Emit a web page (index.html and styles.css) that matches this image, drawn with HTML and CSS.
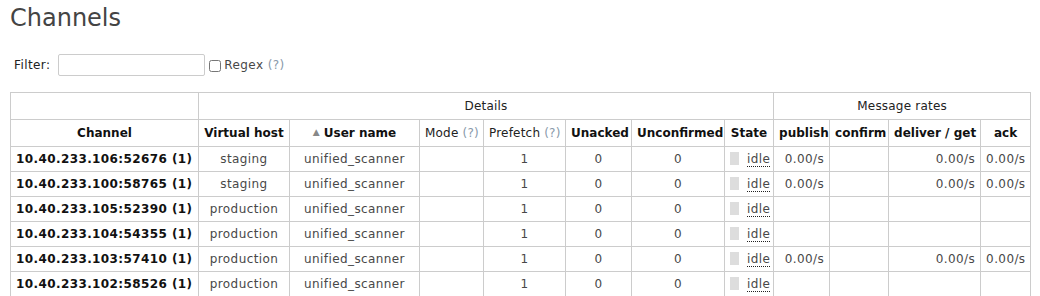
FILE: index.html
```html
<!DOCTYPE html>
<html lang="en">
  <head>
    <meta charset="UTF-8" />
    <title>Channels</title>
    <link rel="stylesheet" href="styles.css">
  </head>
  <body>
    <h1>Channels</h1>

    <div class="filter">
      <label for="filter">Filter:</label>
      <input type="text" id="filter" class="filter-input" />
      <input type="checkbox" id="regex" class="regex-box" />
      <label for="regex" class="regex">Regex <span class="help">(?)</span></label>
    </div>

    <table class="list">
      <colgroup>
        <col style="width: 188px" />
        <col style="width: 91px" />
        <col style="width: 130px" />
        <col style="width: 64px" />
        <col style="width: 82px" />
        <col style="width: 66px" />
        <col style="width: 93px" />
        <col style="width: 49px" />
        <col style="width: 56px" />
        <col style="width: 59px" />
        <col style="width: 92px" />
        <col style="width: 50px" />
      </colgroup>
      <thead>
        <tr class="group">
          <th></th>
          <th colspan="7">Details</th>
          <th colspan="4">Message rates</th>
        </tr>
        <tr>
          <th>Channel</th>
          <th>Virtual host</th>
          <th><span class="arrow">&#9650;</span> User name</th>
          <th class="plain">Mode <span class="help">(?)</span></th>
          <th class="plain">Prefetch <span class="help">(?)</span></th>
          <th>Unacked</th>
          <th>Unconfirmed</th>
          <th>State</th>
          <th>publish</th>
          <th>confirm</th>
          <th>deliver / get</th>
          <th>ack</th>
        </tr>
      </thead>
      <tbody>
        <tr>
          <td class="name">10.40.233.106:52676 (1)</td>
          <td class="c">staging</td>
          <td class="c">unified_scanner</td>
          <td></td>
          <td class="c">1</td>
          <td class="c">0</td>
          <td class="c">0</td>
          <td><span class="state"></span><abbr>idle</abbr></td>
          <td class="r">0.00/s</td>
          <td></td>
          <td class="r">0.00/s</td>
          <td class="r">0.00/s</td>
        </tr>
        <tr>
          <td class="name">10.40.233.100:58765 (1)</td>
          <td class="c">staging</td>
          <td class="c">unified_scanner</td>
          <td></td>
          <td class="c">1</td>
          <td class="c">0</td>
          <td class="c">0</td>
          <td><span class="state"></span><abbr>idle</abbr></td>
          <td class="r">0.00/s</td>
          <td></td>
          <td class="r">0.00/s</td>
          <td class="r">0.00/s</td>
        </tr>
        <tr>
          <td class="name">10.40.233.105:52390 (1)</td>
          <td class="c">production</td>
          <td class="c">unified_scanner</td>
          <td></td>
          <td class="c">1</td>
          <td class="c">0</td>
          <td class="c">0</td>
          <td><span class="state"></span><abbr>idle</abbr></td>
          <td></td>
          <td></td>
          <td></td>
          <td></td>
        </tr>
        <tr>
          <td class="name">10.40.233.104:54355 (1)</td>
          <td class="c">production</td>
          <td class="c">unified_scanner</td>
          <td></td>
          <td class="c">1</td>
          <td class="c">0</td>
          <td class="c">0</td>
          <td><span class="state"></span><abbr>idle</abbr></td>
          <td></td>
          <td></td>
          <td></td>
          <td></td>
        </tr>
        <tr>
          <td class="name">10.40.233.103:57410 (1)</td>
          <td class="c">production</td>
          <td class="c">unified_scanner</td>
          <td></td>
          <td class="c">1</td>
          <td class="c">0</td>
          <td class="c">0</td>
          <td><span class="state"></span><abbr>idle</abbr></td>
          <td class="r">0.00/s</td>
          <td></td>
          <td class="r">0.00/s</td>
          <td class="r">0.00/s</td>
        </tr>
        <tr>
          <td class="name">10.40.233.102:58526 (1)</td>
          <td class="c">production</td>
          <td class="c">unified_scanner</td>
          <td></td>
          <td class="c">1</td>
          <td class="c">0</td>
          <td class="c">0</td>
          <td><span class="state"></span><abbr>idle</abbr></td>
          <td></td>
          <td></td>
          <td></td>
          <td></td>
        </tr>
      </tbody>
    </table>
  </body>
</html>
```

FILE: styles.css
```css
* {
  margin: 0;
  padding: 0;
  box-sizing: border-box;
}
body {
  font-family: "DejaVu Sans", Verdana, sans-serif;
  font-size: 12px;
  letter-spacing: 0.4px;
  color: #484848;
  background: #fff;
  padding: 4px 10px;
}
h1 {
  font-size: 24px;
  font-weight: normal;
  letter-spacing: 0;
  color: #444;
  line-height: 28px;
}
.filter {
  display: flex;
  align-items: center;
  margin-top: 22px;
  padding-left: 4px;
  height: 22px;
  color: #222;
}
.filter-input {
  width: 147px;
  height: 22px;
  margin-left: 8px;
  border: 1px solid #ccc;
  border-radius: 2px;
}
.regex-box {
  width: 12px;
  height: 12px;
  margin: 2px 3px 0 4px;
}
.regex {
  color: #484848;
  white-space: pre;
}
.help {
  color: #8899aa;
}
.list {
  margin-top: 16px;
  border-collapse: collapse;
  table-layout: fixed;
  width: 1021px;
}
.list th,
.list td {
  border: 1px solid #ccc;
  height: 25px;
  padding: 0 5px;
  white-space: nowrap;
}
.list th {
  color: #111;
  font-weight: bold;
  letter-spacing: 0;
  height: 27px;
}
.list .group th,
.list th.plain {
  font-weight: normal;
  letter-spacing: 0.2px;
  color: #222;
}
.arrow {
  color: #888;
  font-size: 9px;
  vertical-align: 2px;
}
.list td.name {
  color: #111;
  font-weight: bold;
}
.list td.c {
  text-align: center;
}
.list td.r {
  text-align: right;
}
.state {
  display: inline-block;
  width: 9px;
  height: 13px;
  background: #ddd;
  margin-right: 8px;
  vertical-align: -2px;
}
abbr {
  text-decoration: none;
  border-bottom: 1px dotted #222;
  color: #484848;
}
```
